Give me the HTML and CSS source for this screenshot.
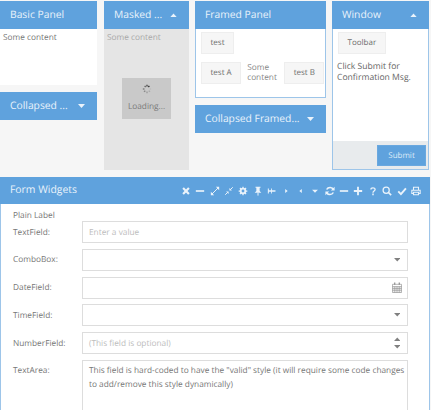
FILE: index.html
```html
<!DOCTYPE html>
<html lang="en">
<head>
<meta charset="utf-8">
<title>Panels</title>
<link rel="stylesheet" href="styles.css">
</head>
<body>
<div class="top">
  <div class="col col-basic">
    <section class="panel plain">
      <header class="hd"><span class="title">Basic Panel</span></header>
      <div class="bd bd-basic">Some content</div>
    </section>
    <header class="hd collapsed"><span class="title">Collapsed ...</span><svg class="tool-caret" viewBox="0 0 8 5"><path d="M0 0h8L4 4.500z"/></svg></header>
  </div>
  <section class="panel masked">
    <header class="hd"><span class="title">Masked ...</span><svg class="tool-caret" viewBox="0 0 8 5"><path d="M0 5h8L4 .5z"/></svg></header>
    <div class="bd bd-masked">Some content
      <div class="loading">
        <svg class="spinner" viewBox="0 0 12 12"><g fill="none" stroke-width="1.600"><path d="M6 1v2" stroke="#444"/><path d="M8.800 2.200 7.600 3.600" stroke="#333"/><path d="M3.200 2.200 4.400 3.600" stroke="#666"/><path d="M1 6h2" stroke="#777"/><path d="M2.400 9.400 4 8" stroke="#888"/><path d="M6 11V9" stroke="#999"/><path d="M9.600 9.400 8 8" stroke="#aaa"/><path d="M11 6H9" stroke="#bbb"/></g></svg>
        <span>Loading...</span>
      </div>
    </div>
  </section>
  <div class="col col-framed">
    <section class="panel framed">
      <header class="hd hd-f"><span class="title">Framed Panel</span></header>
      <div class="tbar"><span class="btn">test</span></div>
      <div class="framed-row"><span class="btn">test A</span><span class="framed-text">Some content</span><span class="btn">test B</span></div>
    </section>
    <header class="hd hd-f collapsed"><span class="title">Collapsed Framed...</span><svg class="tool-caret" viewBox="0 0 8 5"><path d="M0 0h8L4 4.500z"/></svg></header>
  </div>
  <section class="panel window">
    <header class="hd hd-f"><span class="title">Window</span><svg class="tool-caret" viewBox="0 0 8 5"><path d="M0 5h8L4 .5z"/></svg></header>
    <div class="tbar"><span class="btn">Toolbar</span></div>
    <div class="win-text">Click Submit for Confirmation Msg.</div>
    <footer class="win-foot"><span class="submit">Submit</span></footer>
  </section>
</div>
<section class="form-panel">
  <header class="hd hd-form">
    <span class="title">Form Widgets</span>
    <div class="tools">
      <svg viewBox="0 0 12 12"><path d="M2.500 2.500l7 7M9.500 2.500l-7 7" stroke-width="2.600"/></svg>
      <svg viewBox="0 0 12 12"><path d="M1 6h10" stroke-width="2"/></svg>
      <svg viewBox="0 0 12 12"><path d="M2 10l8-8" stroke-width="1.200"/><path class="fill" d="M7 1h4v4zM1 7v4h4z"/></svg>
      <svg viewBox="0 0 12 12"><path d="M1.500 10.500l3-3M10.500 1.500l-3 3" stroke-width="1.200"/><path class="fill" d="M2.500 6.500h3v3zM9.500 5.500h-3v-3z"/></svg>
      <svg viewBox="0 0 12 12"><circle cx="6" cy="6" r="2.800" stroke-width="2.200"/><path d="M6 .8v2M6 9.200v2M.8 6h2M9.200 6h2M2.300 2.300l1.400 1.400M8.300 8.300l1.400 1.400M9.700 2.300 8.300 3.700M3.700 8.300l-1.400 1.400" stroke-width="1.500"/></svg>
      <svg viewBox="0 0 12 12"><path class="fill" d="M3 1h6v1H8v4l2 2H2l2-2V2H3z"/><path d="M6 8v3.500" stroke-width="1.200"/></svg>
      <svg viewBox="0 0 12 12"><path class="fill" d="M1 3h1.200v2.200H5V3h1v2.200h3.200L11 6 9.200 6.800H6V9H5V6.800H2.200V9H1z"/></svg>
      <svg viewBox="0 0 12 12"><path class="fill" d="M5 3.500 8 6 5 8.500z"/></svg>
      <svg viewBox="0 0 12 12"><path class="fill" d="M7 3.500 4 6l3 2.500z"/></svg>
      <svg viewBox="0 0 12 12"><path class="fill" d="M2.500 4.500h7L6 8z"/></svg>
      <svg viewBox="0 0 12 12"><path d="M10.300 4.500A4.600 4.600 0 0 0 2 4.200M1.700 7.500A4.600 4.600 0 0 0 10 7.800" stroke-width="1.900"/><path class="fill" d="M11.500 1v4.500H7zM.5 11V6.500H5z"/></svg>
      <svg viewBox="0 0 12 12"><path d="M1 6h10" stroke-width="2"/></svg>
      <svg viewBox="0 0 12 12"><path d="M1 6h10M6 1v10" stroke-width="2.200"/></svg>
      <svg viewBox="0 0 12 12"><path d="M3.500 4.300C3.500 1.500 8.500 1.500 8.500 4.200 8.500 6 6 6 6 8" stroke-width="1.600"/><path d="M6 9v2" stroke-width="1.800"/></svg>
      <svg viewBox="0 0 12 12"><circle cx="5" cy="5" r="3.700" stroke-width="1.500"/><path d="M7.800 7.800 11 11" stroke-width="2"/></svg>
      <svg viewBox="0 0 12 12"><path d="M1.500 6.500 4.700 9.700 10.700 2.800" stroke-width="2.300"/></svg>
      <svg viewBox="0 0 12 12"><path d="M3 4.500V1.500h6v3M3 9H1V5h10v4H9M3 7.500h6v3H3z" stroke-width="1.300"/></svg>
    </div>
  </header>
  <div class="form-body">
    <div class="plain-label">Plain Label</div>
    <div class="row"><label class="lbl">TextField:</label><div class="field"><span class="ph">Enter a value</span></div></div>
    <div class="row"><label class="lbl">ComboBox:</label><div class="field"><svg class="trig" viewBox="0 0 8 5"><path d="M0 0h8L4 4.500z"/></svg></div></div>
    <div class="row"><label class="lbl">DateField:</label><div class="field"><svg class="cal" viewBox="0 0 11 12"><path d="M.5 2.500h10v9H.5zM.5 5h10M.5 7h10M.5 9h10M2.500 5v6.500M4.500 5v6.500M6.500 5v6.500M8.500 5v6.500"/><path d="M3 .5v2.500M8 .5v2.500" stroke-width="1.300"/></svg></div></div>
    <div class="row"><label class="lbl">TimeField:</label><div class="field"><svg class="trig" viewBox="0 0 8 5"><path d="M0 0h8L4 4.500z"/></svg></div></div>
    <div class="row"><label class="lbl">NumberField:</label><div class="field"><span class="ph">(This field is optional)</span><div class="spin"><svg class="trig" viewBox="0 0 8 5"><path d="M0 5h8L4 .5z"/></svg><svg class="trig" viewBox="0 0 8 5"><path d="M0 0h8L4 4.500z"/></svg></div></div></div>
    <div class="row"><label class="lbl">TextArea:</label><div class="field area">This field is hard-coded to have the "valid" style (it will require some code changes to add/remove this style dynamically)</div></div>
  </div>
</section>
</body>
</html>
```
FILE: styles.css
```css
* { box-sizing: border-box; }
html, body { margin: 0; height: 410px; overflow: hidden; }
body {
  width: 431px;
  background: #f6f6f6;
  font: 8.300px/11px "Open Sans", sans-serif;
  text-rendering: geometricPrecision;
  color: #777;
  display: flex;
  flex-direction: column;
}
.top { display: flex; height: 177px; padding-top: 1px; flex: none; }
.col { display: flex; flex-direction: column; gap: 7px; }
.col-basic { width: 97px; flex: none; }
.col-framed { width: 131px; margin-left: 6px; flex: none; }
.hd {
  height: 28px;
  background: #5fa2dd;
  color: #eaf3fb;
  display: flex;
  align-items: center;
  justify-content: space-between;
  padding: 0 12px 0 10px;
  font-size: 10.300px;
  flex: none;
}
.title { white-space: nowrap; }
.tool-caret { width: 7px; height: 4.500px; fill: #eaf3fb; flex: none; }
.panel { display: flex; flex-direction: column; }
.bd { padding: 3px; }
.bd-basic { background: #fff; height: 56px; }
.masked { width: 85px; height: 169px; margin-left: 7px; background: #e5e5e5; flex: none; }
.bd-masked { flex: 1; color: #a9a9a9; }
.loading {
  width: 49px; height: 41px; margin: 35px 0 0 15px;
  background: #c9c9c9; color: #7a7a7a;
  display: flex; flex-direction: column; align-items: center;
  padding-top: 6px; gap: 7px;
}
.spinner { width: 10px; height: 10px; }
.framed { height: 97px; border: 1px solid #9dc5e9; background: #fff; }
.framed .hd, .window .hd { margin: -1px -1px 0; }
.tbar { padding: 3px 5px 0; display: flex; flex: none; }
.btn {
  height: 22px; line-height: 20px; padding: 0 8.500px; font-size: 8px;
  background: #f6f6f6; border: 1px solid #eee; color: #6e6e6e; white-space: nowrap; flex: none;
}
.framed-row { display: flex; align-items: center; gap: 6px; padding: 8px 5px 0; }
.framed-text { width: 31px; line-height: 10.500px; flex: none; color: #888; }
.window { width: 97px; height: 169px; margin-left: 6px; background: #fff; border: 1px solid #9dc5e9; flex: none; }
.win-text { padding: 7px 4px; flex: 1; color: #666; font-size: 8.600px; line-height: 10.700px; }
.win-foot { height: 28px; background: #e8ebed; display: flex; align-items: center; justify-content: flex-end; padding: 0 2px 0 0; flex: none; }
.submit { width: 49px; height: 21px; line-height: 20px; text-align: center; background: #5fa2dd; color: #dcebf8; border: 1px solid #6aa8df; font-size: 8px; }
.form-panel { flex: 1; margin-right: 1px; display: flex; flex-direction: column; min-height: 0; overflow: hidden; }
.hd-form { height: 27px; padding: 0 9px 0 10px; font-size: 10.400px; }
.tools { display: flex; gap: 4.400px; }
.tools svg { width: 10px; height: 10px; fill: none; stroke: #eaf3fb; }
.tools svg .fill { fill: #eaf3fb; stroke: none; }
.form-body { flex: 1; background: #fff; border: 1px solid #9dc5e9; border-width: 0 1px; padding: 6px 21px 0 12px; display: flex; flex-direction: column; }
.plain-label { height: 11px; flex: none; }
.row { display: flex; margin-bottom: 5.800px; flex: none; }
.lbl { width: 69px; padding-top: 5.500px; flex: none; }
.field {
  flex: 1; height: 22px; background: #fff; border: 1px solid #ddd;
  display: flex; align-items: center; justify-content: flex-end; padding: 0 7px 0 6px; position: relative;
}
.ph { color: #bdbdbd; position: absolute; left: 6px; top: 5px; }
.trig { width: 6.500px; height: 4px; fill: #808080; display: block; }
.cal { width: 10px; height: 11px; fill: none; stroke: #8c8c8c; stroke-width: .7; margin-right: -2px; }
.spin { display: flex; flex-direction: column; gap: 4px; }
.area { display: block; height: 70px; padding: 3px 1px 0 6px; line-height: 14px; }
```
